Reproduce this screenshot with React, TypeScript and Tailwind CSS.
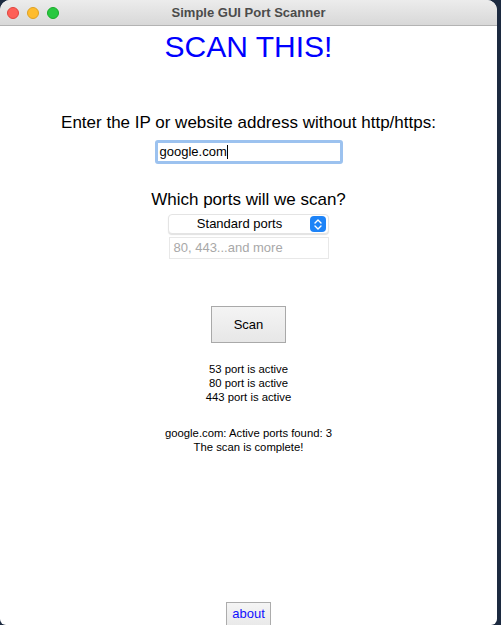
import React from 'react';

const RESULTS = ['53 port is active', '80 port is active', '443 port is active'];

const TrafficLights = () => (
    <div className="absolute left-[7px] top-[7px] flex gap-[8px]">
        <span className="w-[12px] h-[12px] rounded-full bg-[#fe5f57] border border-[#e0443e]" />
        <span className="w-[12px] h-[12px] rounded-full bg-[#febc2e] border border-[#dea123]" />
        <span className="w-[12px] h-[12px] rounded-full bg-[#28c840] border border-[#1aab29]" />
    </div>
);

const Stepper = () => (
    <div className="w-[16px] h-[16px] rounded-[4px] bg-[#1d83f7] flex items-center justify-center">
        <svg width="8" height="11" viewBox="0 0 8 11" fill="none" stroke="white" strokeWidth="1.4" strokeLinecap="round" strokeLinejoin="round">
            <path d="M1 4 L4 1 L7 4" />
            <path d="M1 7 L4 10 L7 7" />
        </svg>
    </div>
);

export default function App() {
    return (
        <div className="w-[501px] h-[625px] bg-[#1c2a40] overflow-hidden" style={{ fontFamily: '"Liberation Sans", Arial, sans-serif' }}>
            <div className="w-[497px] h-[625px] bg-white rounded-t-[10px] rounded-b-[6px] overflow-hidden flex flex-col">
                {/* title bar */}
                <div className="relative h-[26px] shrink-0 bg-gradient-to-b from-[#ececec] to-[#d8d8d8] border-b border-[#b3b3b3] flex items-center justify-center">
                    <TrafficLights />
                    <span className="text-[13px] font-bold text-[#4b4b4b]">Simple GUI Port Scanner</span>
                </div>

                <div className="flex-1 flex flex-col items-center">
                    <h1 className="mt-[4px] text-[30px] leading-[34px] text-[#0000ff]">SCAN THIS!</h1>

                    <p className="mt-[49px] text-[17px] leading-[20px] text-black">Enter the IP or website address without http/https:</p>
                    <div className="mt-[7px] w-[188px] h-[24px] border-[3px] border-[#9cc2ef] rounded-[3px] bg-white flex items-center pl-[2px]">
                        <span className="text-[13px] leading-[16px] text-black">google.com</span>
                        <span className="w-px h-[14px] bg-black" />
                    </div>

                    <p className="mt-[26px] text-[17px] leading-[20px] text-black">Which ports will we scan?</p>
                    <div className="mt-[4px] w-[161px] h-[20px] rounded-[4px] bg-white border border-[#e4e4e4] shadow-[0_1px_1px_rgba(0,0,0,0.12)] flex items-center pr-[2px]">
                        <span className="flex-1 text-center text-[13px] text-black">Standard ports</span>
                        <Stepper />
                    </div>
                    <div className="mt-[3px] w-[160px] h-[22px] border border-[#e8e8e8] flex items-center pl-[4px]">
                        <span className="text-[13px] text-[#a8a8a8]">80, 443...and more</span>
                    </div>

                    <button className="mt-[47px] w-[75px] h-[37px] border border-[#a9a9a9] bg-gradient-to-b from-[#f4f4f4] to-[#e7e7e7] text-[13px] text-black">Scan</button>

                    <div className="mt-[19px] flex flex-col items-center text-[11.3px] leading-[14px] text-black">
                        {RESULTS.map(line => (
                            <span key={line}>{line}</span>
                        ))}
                    </div>

                    <div className="mt-[22px] flex flex-col items-center text-[11.3px] leading-[14px] text-black">
                        <span>google.com: Active ports found: 3</span>
                        <span>The scan is complete!</span>
                    </div>

                    <button className="mt-auto w-[45px] h-[23px] border border-[#acacac] border-b-0 bg-gradient-to-b from-[#f5f5f5] to-[#e9e9e9] text-[13px] text-[#1111ff] leading-[20px]">about</button>
                </div>
            </div>
        </div>
    );
}
